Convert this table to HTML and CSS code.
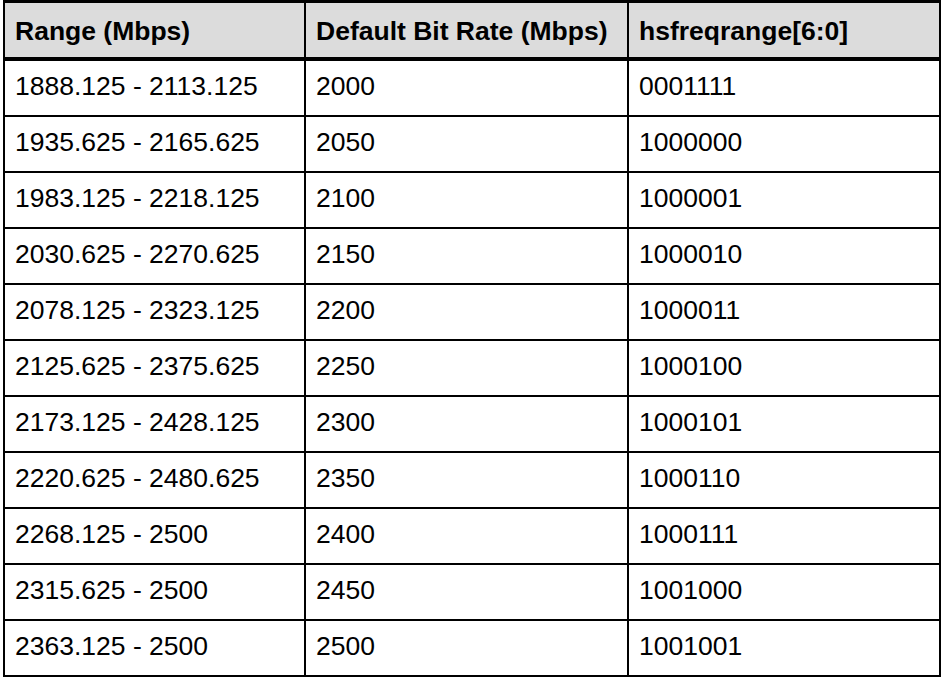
FILE: index.html
```html
<!DOCTYPE html>
<html>
<head>
<meta charset="utf-8">
<link rel="stylesheet" href="styles.css">
</head>
<body>
<table class="freq-table">
  <thead>
    <tr>
      <th class="col-range">Range (Mbps)</th>
      <th class="col-rate">Default Bit Rate (Mbps)</th>
      <th class="col-code">hsfreqrange[6:0]</th>
    </tr>
  </thead>
  <tbody>
    <tr><td>1888.125 - 2113.125</td><td>2000</td><td>0001111</td></tr>
    <tr><td>1935.625 - 2165.625</td><td>2050</td><td>1000000</td></tr>
    <tr><td>1983.125 - 2218.125</td><td>2100</td><td>1000001</td></tr>
    <tr><td>2030.625 - 2270.625</td><td>2150</td><td>1000010</td></tr>
    <tr><td>2078.125 - 2323.125</td><td>2200</td><td>1000011</td></tr>
    <tr><td>2125.625 - 2375.625</td><td>2250</td><td>1000100</td></tr>
    <tr><td>2173.125 - 2428.125</td><td>2300</td><td>1000101</td></tr>
    <tr><td>2220.625 - 2480.625</td><td>2350</td><td>1000110</td></tr>
    <tr><td>2268.125 - 2500</td><td>2400</td><td>1000111</td></tr>
    <tr><td>2315.625 - 2500</td><td>2450</td><td>1001000</td></tr>
    <tr><td>2363.125 - 2500</td><td>2500</td><td>1001001</td></tr>
  </tbody>
</table>
</body>
</html>
```
FILE: styles.css
```css
html, body {
  background: #ffffff;
}
body {
  margin: 0 0 0 3px;
  font-family: "Liberation Sans", Arial, sans-serif;
  color: #000000;
}
.freq-table {
  width: 938px;
  table-layout: fixed;
  border-collapse: separate;
  border-spacing: 0;
  border-left: 2px solid #000;
  border-top: 3px solid #000;
  font-size: 26.5px;
  line-height: 30px;
}
.freq-table th,
.freq-table td {
  box-sizing: border-box;
  text-align: left;
  vertical-align: top;
  border-right: 2px solid #000;
  border-bottom: 2px solid #000;
  padding: 10px 10px 14px 10px;
  height: 56px;
  white-space: nowrap;
}
.freq-table th {
  background: #dcdcdc;
  font-weight: bold;
  border-bottom: 4px solid #000;
  padding: 13px 10px 11px 10px;
  height: 58px;
}
.col-range { width: 301px; }
.col-rate { width: 323px; }
.col-code { width: 312px; }
```
